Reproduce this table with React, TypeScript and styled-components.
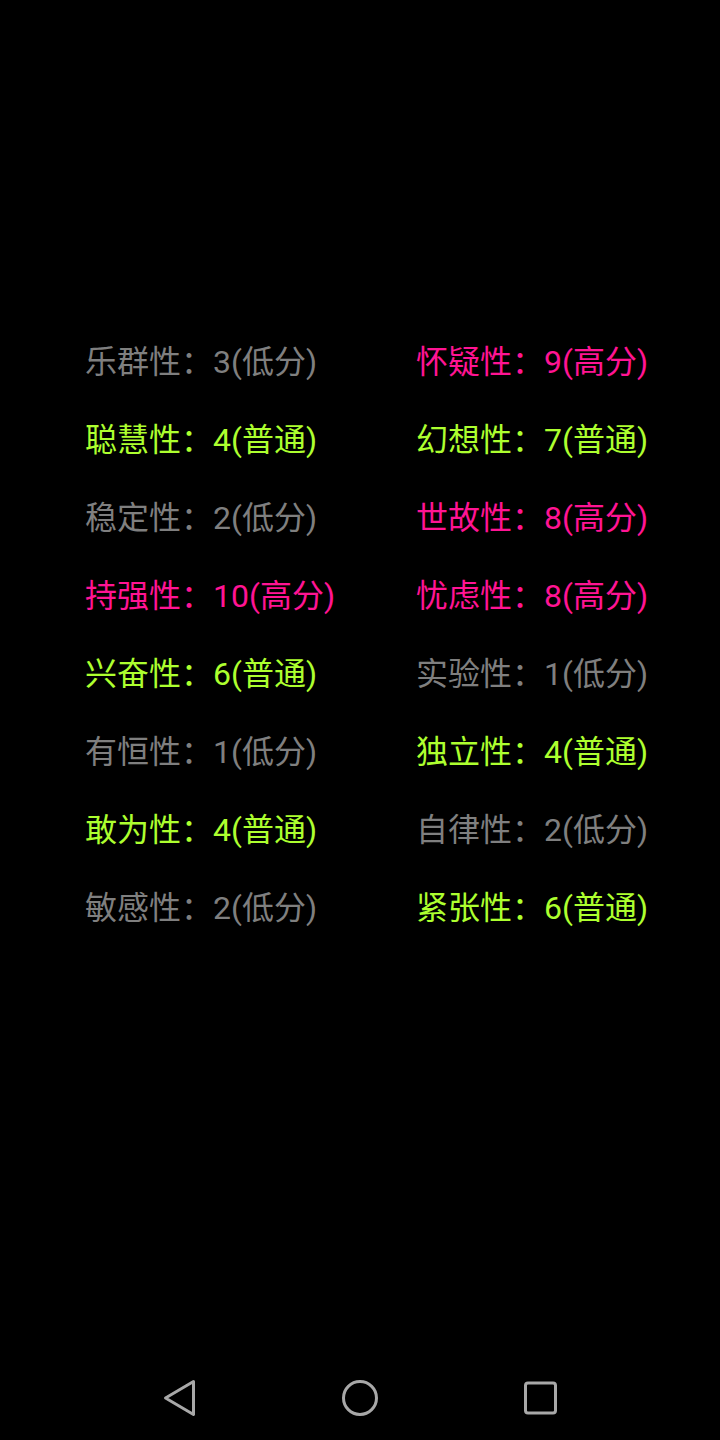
import React from "react";
import styled, { createGlobalStyle } from "styled-components";

const Global = createGlobalStyle`
  html, body { margin: 0; padding: 0; background: #000; }
  body { font-family: Roboto, "Noto Sans CJK SC", sans-serif; }
`;

type Level = "low" | "mid" | "high";

const colors: Record<Level, string> = {
  low: "#7f7f7f",
  mid: "#adff2f",
  high: "#ff1493",
};

const labels: Record<Level, string> = {
  low: "低分",
  mid: "普通",
  high: "高分",
};

const data: [string, number, Level][] = [
  ["乐群性", 3, "low"],
  ["怀疑性", 9, "high"],
  ["聪慧性", 4, "mid"],
  ["幻想性", 7, "mid"],
  ["稳定性", 2, "low"],
  ["世故性", 8, "high"],
  ["持强性", 10, "high"],
  ["忧虑性", 8, "high"],
  ["兴奋性", 6, "mid"],
  ["实验性", 1, "low"],
  ["有恒性", 1, "low"],
  ["独立性", 4, "mid"],
  ["敢为性", 4, "mid"],
  ["自律性", 2, "low"],
  ["敏感性", 2, "low"],
  ["紧张性", 6, "mid"],
];

const Page = styled.div`
  width: 720px;
  height: 1440px;
  display: flex;
  flex-direction: column;
  background: #000;
`;

const Content = styled.div`
  flex: 1;
  padding: 323px 0 0 85px;
`;

const Grid = styled.div`
  display: grid;
  grid-template-columns: 331px auto;
`;

const Item = styled.div<{ $level: Level }>`
  height: 78px;
  line-height: 78px;
  font-size: 32px;
  color: ${(p) => colors[p.$level]};
  font-family: Roboto, "Noto Sans CJK SC", sans-serif;
  white-space: nowrap;
`;

const NavBar = styled.div`
  height: 84px;
  display: flex;
  justify-content: center;
  align-items: center;
`;

const NavSlot = styled.div`
  width: 180px;
  display: flex;
  justify-content: center;
  align-items: center;
`;

export default function App() {
  return (
    <Page>
      <Global />
      <Content>
        <Grid>
          {data.map(([name, score, level]) => (
            <Item key={name} $level={level}>
              {name}：{score}({labels[level]})
            </Item>
          ))}
        </Grid>
      </Content>
      <NavBar>
        <NavSlot>
          <svg width="40" height="40" viewBox="0 0 40 40">
            <path
              d="M33.5 3.5 L5.5 20 L33.5 36.5 Z"
              fill="none"
              stroke="#a8a8a8"
              strokeWidth="3"
              strokeLinejoin="round"
            />
          </svg>
        </NavSlot>
        <NavSlot>
          <svg width="40" height="40" viewBox="0 0 40 40">
            <circle cx="20" cy="20" r="16.5" fill="none" stroke="#a8a8a8" strokeWidth="3" />
          </svg>
        </NavSlot>
        <NavSlot>
          <svg width="40" height="40" viewBox="0 0 40 40">
            <rect x="5.5" y="5" width="30" height="30" rx="2.5" fill="none" stroke="#a8a8a8" strokeWidth="3" />
          </svg>
        </NavSlot>
      </NavBar>
    </Page>
  );
}
